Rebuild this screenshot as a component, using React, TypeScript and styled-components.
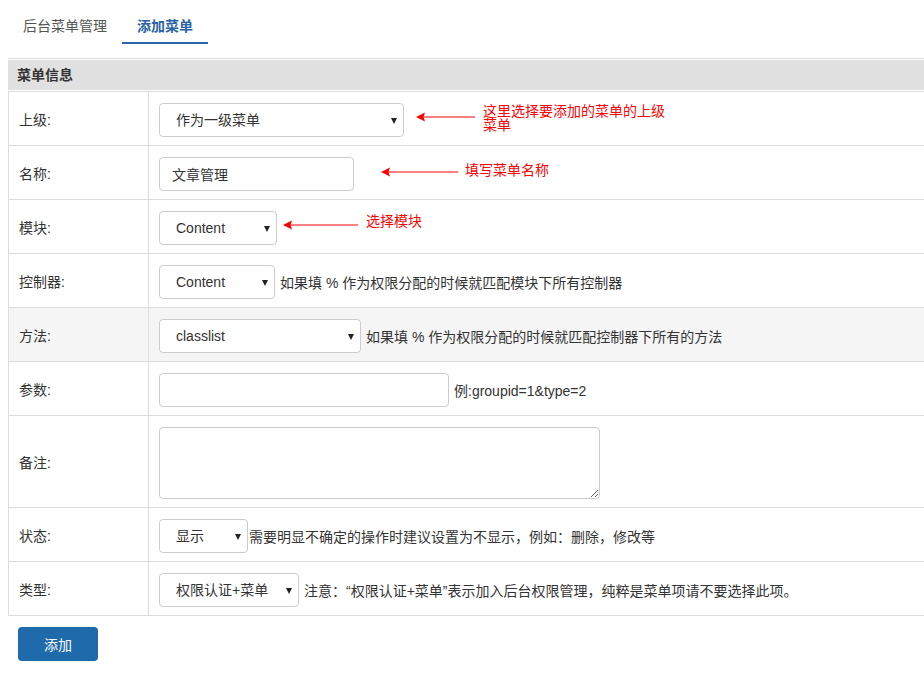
import React from 'react';
import styled, { createGlobalStyle } from 'styled-components';

const GlobalStyle = createGlobalStyle`
  html, body {
    margin: 0;
    padding: 0;
    background: #fff;
  }
  body {
    font-family: "Liberation Sans", "Noto Sans CJK SC", sans-serif;
    font-size: 14px;
    color: #333;
  }
  * {
    box-sizing: border-box;
  }
`;

type Callout = {
  arrowLeft: number;
  arrowTop: number;
  arrowWidth: number;
  textLeft: number;
  textTop: number;
  textWidth?: number;
  text: string;
};

type FieldRow = {
  label: string;
  kind: 'select' | 'input' | 'textarea';
  value?: string;
  width: number;
  hint?: string;
  hintGap?: number;
  striped?: boolean;
  callout?: Callout;
};

const rows: FieldRow[] = [
  {
    label: '上级:',
    kind: 'select',
    value: '作为一级菜单',
    width: 245,
    callout: {
      arrowLeft: 267,
      arrowTop: 20,
      arrowWidth: 59,
      textLeft: 334,
      textTop: 12,
      textWidth: 186,
      text: '这里选择要添加的菜单的上级菜单',
    },
  },
  {
    label: '名称:',
    kind: 'input',
    value: '文章管理',
    width: 195,
    callout: {
      arrowLeft: 232,
      arrowTop: 21,
      arrowWidth: 77,
      textLeft: 316,
      textTop: 17,
      text: '填写菜单名称',
    },
  },
  {
    label: '模块:',
    kind: 'select',
    value: 'Content',
    width: 118,
    callout: {
      arrowLeft: 134,
      arrowTop: 20,
      arrowWidth: 75,
      textLeft: 217,
      textTop: 14,
      text: '选择模块',
    },
  },
  {
    label: '控制器:',
    kind: 'select',
    value: 'Content',
    width: 116,
    hint: '如果填 % 作为权限分配的时候就匹配模块下所有控制器',
    hintGap: 5,
  },
  {
    label: '方法:',
    kind: 'select',
    value: 'classlist',
    width: 202,
    hint: '如果填 % 作为权限分配的时候就匹配控制器下所有的方法',
    hintGap: 5,
    striped: true,
  },
  {
    label: '参数:',
    kind: 'input',
    width: 290,
    hint: '例:groupid=1&type=2',
    hintGap: 5,
  },
  {
    label: '备注:',
    kind: 'textarea',
    width: 441,
  },
  {
    label: '状态:',
    kind: 'select',
    value: '显示',
    width: 89,
    hint: '需要明显不确定的操作时建议设置为不显示，例如：删除，修改等',
    hintGap: 1,
  },
  {
    label: '类型:',
    kind: 'select',
    value: '权限认证+菜单',
    width: 140,
    hint: '注意：“权限认证+菜单”表示加入后台权限管理，纯粹是菜单项请不要选择此项。',
    hintGap: 5,
  },
];

const App = () => {
  return (
    <Page>
      <GlobalStyle />
      <Tabs>
        <Tab>后台菜单管理</Tab>
        <Tab $active>添加菜单</Tab>
      </Tabs>
      <Panel>
        <PanelHeader>菜单信息</PanelHeader>
        <Table>
          {rows.map((row) => (
            <Row key={row.label} $striped={row.striped}>
              <Label>{row.label}</Label>
              <Cell $gap={row.hintGap ?? 5}>
                {row.kind === 'select' && (
                  <SelectWrap $width={row.width}>
                    <Select defaultValue={row.value}>
                      <option value={row.value}>{row.value}</option>
                    </Select>
                  </SelectWrap>
                )}
                {row.kind === 'input' && (
                  <TextInput $width={row.width} defaultValue={row.value} />
                )}
                {row.kind === 'textarea' && <TextArea $width={row.width} />}
                {row.hint && <Hint>{row.hint}</Hint>}
                {row.callout && (
                  <>
                    <Arrow
                      $left={row.callout.arrowLeft}
                      $top={row.callout.arrowTop}
                      width={row.callout.arrowWidth}
                      height={10}
                      viewBox={`0 0 ${row.callout.arrowWidth} 10`}
                    >
                      <line
                        x1={6}
                        y1={5}
                        x2={row.callout.arrowWidth}
                        y2={5}
                        stroke="#f00"
                        strokeWidth={1}
                      />
                      <polygon points="0,5 9,0.5 7.5,5 9,9.5" fill="#f00" />
                    </Arrow>
                    <CalloutText
                      $left={row.callout.textLeft}
                      $top={row.callout.textTop}
                      $width={row.callout.textWidth}
                    >
                      {row.callout.text}
                    </CalloutText>
                  </>
                )}
              </Cell>
            </Row>
          ))}
        </Table>
      </Panel>
      <SubmitButton type="button">添加</SubmitButton>
    </Page>
  );
};

export default App;

const Page = styled.div`
  width: 924px;
  padding-left: 8px;
  padding-bottom: 14px;
  overflow: hidden;
`;

const Tabs = styled.div`
  display: flex;
  height: 58px;
`;

const Tab = styled.div<{ $active?: boolean }>`
  height: 44px;
  padding: 16px 15px 6px;
  line-height: 20px;
  font-size: 14px;
  color: ${(p) => (p.$active ? '#2a62a6' : '#555')};
  font-weight: ${(p) => (p.$active ? 'bold' : 'normal')};
  border-bottom: 2px solid ${(p) => (p.$active ? '#2b66aa' : 'transparent')};
`;

const Panel = styled.div`
  border-top: 1px solid #ddd;
  padding-top: 1px;
`;

const PanelHeader = styled.div`
  height: 31px;
  line-height: 30px;
  padding-left: 9px;
  background: #e1e1e1;
  border-bottom: 1px solid #fff;
  font-size: 14px;
  font-weight: bold;
  color: #333;
`;

const Table = styled.div`
  border-left: 1px solid #ddd;
  border-bottom: 1px solid #ddd;
`;

const Row = styled.div<{ $striped?: boolean }>`
  display: grid;
  grid-template-columns: 140px 1fr;
  border-top: 1px solid #ddd;
  background: ${(p) => (p.$striped ? '#f5f5f5' : '#fff')};
`;

const Label = styled.div`
  display: flex;
  align-items: center;
  padding: 11px 10px 8px;
  border-right: 1px solid #ddd;
  color: #333;
  line-height: 20px;
`;

const Cell = styled.div<{ $gap: number }>`
  position: relative;
  display: flex;
  align-items: center;
  gap: ${(p) => p.$gap}px;
  padding: 11px 10px 8px;
`;

const SelectWrap = styled.div<{ $width: number }>`
  position: relative;
  flex: none;
  width: ${(p) => p.$width}px;
  height: 34px;

  &::after {
    content: '';
    position: absolute;
    right: 7px;
    top: 15px;
    border-left: 3px solid transparent;
    border-right: 3px solid transparent;
    border-top: 6px solid #222;
    pointer-events: none;
  }
`;

const Select = styled.select`
  appearance: none;
  -webkit-appearance: none;
  width: 100%;
  height: 34px;
  padding: 0 24px 0 16px;
  border: 1px solid #ccc;
  border-radius: 4px;
  background: #fff;
  font-family: inherit;
  font-size: 14px;
  color: #333;
  outline: none;
`;

const TextInput = styled.input<{ $width: number }>`
  flex: none;
  width: ${(p) => p.$width}px;
  height: 34px;
  padding: 0 12px;
  border: 1px solid #ccc;
  border-radius: 4px;
  font-family: inherit;
  font-size: 14px;
  color: #333;
  outline: none;
`;

const TextArea = styled.textarea<{ $width: number }>`
  flex: none;
  display: block;
  width: ${(p) => p.$width}px;
  height: 72px;
  padding: 6px 12px;
  border: 1px solid #ccc;
  border-radius: 4px;
  font-family: inherit;
  font-size: 14px;
  outline: none;
`;

const Hint = styled.span`
  white-space: nowrap;
  font-size: 14px;
  color: #333;
`;

const Arrow = styled.svg<{ $left: number; $top: number }>`
  position: absolute;
  left: ${(p) => p.$left}px;
  top: ${(p) => p.$top}px;
`;

const CalloutText = styled.div<{ $left: number; $top: number; $width?: number }>`
  position: absolute;
  left: ${(p) => p.$left}px;
  top: ${(p) => p.$top}px;
  width: ${(p) => (p.$width ? `${p.$width}px` : 'auto')};
  white-space: ${(p) => (p.$width ? 'normal' : 'nowrap')};
  font-size: 14px;
  line-height: 14px;
  color: #f00;
`;

const SubmitButton = styled.button`
  display: block;
  margin: 11px 0 0 10px;
  width: 80px;
  height: 34px;
  border: none;
  border-radius: 4px;
  background: #1f6aab;
  color: #fff;
  font-family: inherit;
  font-size: 14px;
`;
